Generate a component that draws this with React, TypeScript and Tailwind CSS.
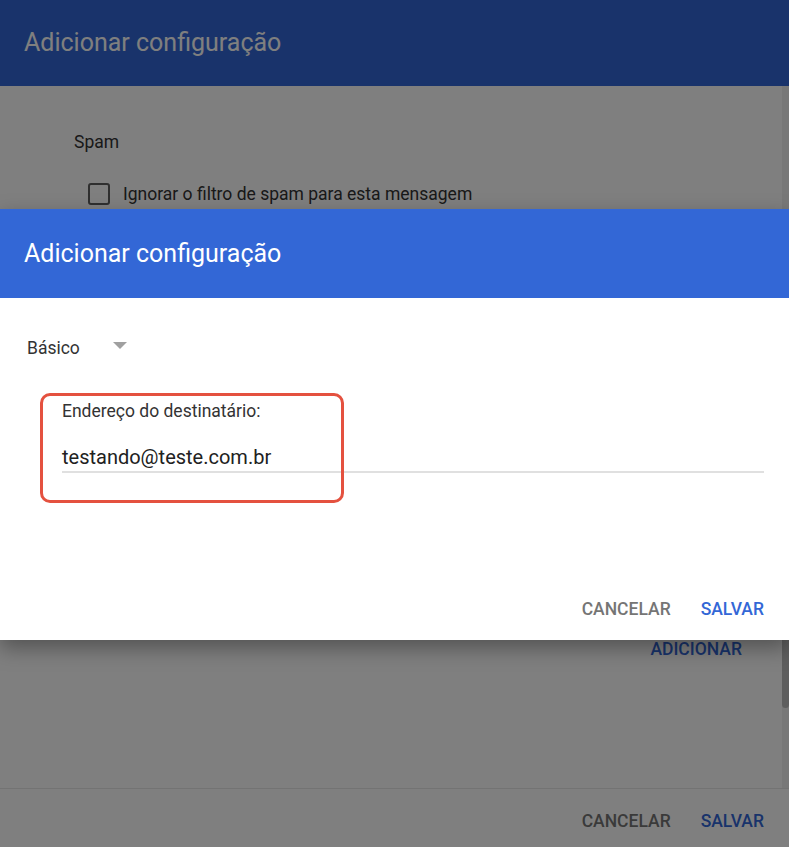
import React from "react";

const title = "Adicionar configuração";

function BackDialog() {
  return (
    <div className="flex h-full flex-col">
      <header className="flex h-[86px] items-center bg-[#3367d6] px-6">
        <h1 className="text-[25px] leading-8 text-white">{title}</h1>
      </header>

      <div className="flex min-h-0 flex-1">
        <div className="flex-1 pl-[74px] pt-[44px]">
          <p className="text-[17.5px] leading-6 text-[#333]">Spam</p>
          <label className="ml-[14px] mt-[28px] flex items-center gap-[13px] text-[17.5px] leading-6 text-[#333]">
            <span className="h-[22px] w-[22px] rounded-[3px] border-2 border-[#5f5f5f]" />
            Ignorar o filtro de spam para esta mensagem
          </label>
          <div className="mt-[431px] flex justify-end pr-[40px]">
            <button className="text-[17.5px] font-medium uppercase leading-6 text-[#3367d6]">
              Adicionar
            </button>
          </div>
        </div>
        <div className="flex w-[7px] flex-col bg-[#f0f0f0] pt-[214px]">
          <div className="h-[408px] rounded-b-[4px] bg-[#bdbdbd]" />
        </div>
      </div>

      <footer className="flex h-[59px] items-start justify-end gap-[30px] border-t border-[#e6e6e6] pr-[25px] pt-[20px]">
        <button className="text-[17.5px] font-medium uppercase leading-6 text-[#757575]">Cancelar</button>
        <button className="text-[17.5px] font-medium uppercase leading-6 text-[#3367d6]">Salvar</button>
      </footer>
    </div>
  );
}

function FrontDialog() {
  return (
    <div className="absolute left-0 right-0 top-[209px] bg-white shadow-[0_8px_20px_rgba(0,0,0,0.35)]">
      <header className="flex h-[89px] items-center bg-[#3367d6] px-6">
        <h2 className="text-[25px] leading-8 text-white">{title}</h2>
      </header>

      <div className="flex h-[342px] flex-col px-[27px] pt-[38px]">
        <div className="flex items-center gap-[33px] text-[17.5px] leading-6 text-[#333]">
          <span>Básico</span>
          <svg width="14" height="7" viewBox="0 0 14 7" className="-mt-[6px]">
            <path d="M0 0h14L7 7z" fill="#a0a0a0" />
          </svg>
        </div>

        <div className="ml-[35px] mr-[-2px] mt-[39px]">
          <p className="text-[17.5px] leading-6 text-[#333]">Endereço do destinatário:</p>
          <div className="mt-[20px] border-b-2 border-[#e0e0e0] text-[20px] leading-[28px] text-[#212121]">
            testando@teste.com.br
          </div>
        </div>

        <div className="mr-[-2px] mt-auto flex justify-end gap-[30px] pb-[19px]">
          <button className="text-[17.5px] font-medium uppercase leading-6 text-[#757575]">Cancelar</button>
          <button className="text-[17.5px] font-medium uppercase leading-6 text-[#3367d6]">Salvar</button>
        </div>
      </div>

      {/* annotation round the recipient field */}
      <div className="absolute left-[40px] top-[184px] h-[110px] w-[304px] rounded-[10px] border-[3px] border-[#e4513f]" />
    </div>
  );
}

export default function App() {
  return (
    <div className="relative h-[847px] w-full overflow-hidden bg-white font-['Roboto',sans-serif]">
      <BackDialog />
      <div className="absolute inset-0 bg-black/50" />
      <FrontDialog />
    </div>
  );
}
